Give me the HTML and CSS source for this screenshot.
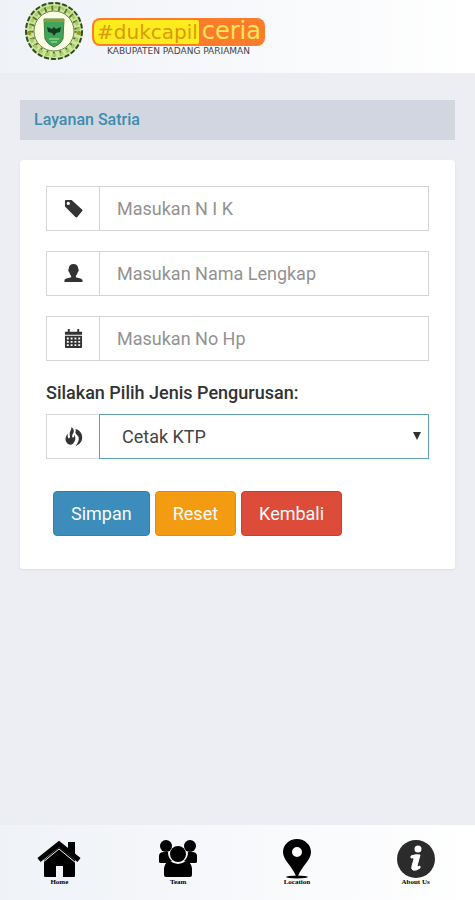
FILE: index.html
```html
<!DOCTYPE html>
<html lang="id">
<head>
<meta charset="utf-8">
<meta name="viewport" content="width=device-width, initial-scale=1">
<title>Layanan Satria</title>
<link rel="stylesheet" href="styles.css">
</head>
<body>
<header class="topbar">
  <svg class="seal" viewBox="0 0 60 60" aria-hidden="true">
    <circle cx="30" cy="30" r="29" fill="#cfe69a"/>
    <circle cx="30" cy="30" r="28" fill="none" stroke="#2f4a2c" stroke-width="2" stroke-dasharray="5 2"/>
    <circle cx="30" cy="30" r="23" fill="none" stroke="#557044" stroke-width="5" stroke-dasharray="2 5"/>
    <circle cx="30" cy="30" r="24" fill="none" stroke="#a9cc62" stroke-width="3" stroke-dasharray="4 3"/>
    <circle cx="30" cy="30" r="20" fill="#fbfde4" stroke="#6b8a45"/>
    <circle cx="5" cy="32" r="2" fill="#8c9620"/>
    <circle cx="55" cy="32" r="2" fill="#8c9620"/>
    <path d="M20 18H40L39 38Q37 43 30 46Q23 43 21 38Z" fill="#3fa55b" stroke="#487c3b"/>
    <path d="M20 18H40V21H20Z" fill="#8b9c3c"/>
    <path d="M23 26L28 28L30 26L32 28L37 26L36 31L32 32L30 35L28 32L24 31Z" fill="#173b22"/>
    <path d="M25 38H35M27 41H33" stroke="#80c477" stroke-width="2"/>
  </svg>
  <div class="brand">
    <div class="wordmark"><span class="word-main">#dukcapil</span><span class="word-end">ceria</span></div>
    <div class="region">KABUPATEN PADANG PARIAMAN</div>
  </div>
</header>

<main class="content">
  <h1 class="title">Layanan Satria</h1>
  <form class="card">
    <div class="group">
      <label class="addon" for="nik" aria-label="NIK">
        <svg class="glyph" viewBox="0 0 20 20"><path fill-rule="evenodd" d="M1 2Q1 1 2 1H8L19 11Q20 12 19 13L14 19Q13 20 12 19L1 8ZM4.500 3A1.700 1.700 0 1 0 4.500 6.400A1.700 1.700 0 1 0 4.500 3Z"/></svg>
      </label>
      <input class="field" id="nik" type="text" placeholder="Masukan N I K">
    </div>
    <div class="group">
      <label class="addon" for="nama" aria-label="Nama Lengkap">
        <svg class="glyph" viewBox="0 0 20 20"><path d="M10 0C13 0 15 2 15 5C16 6 15.500 8 14.500 8.500C14 11 13 11.500 12.500 12.500V14C14 15 19 15 19.500 17V19H.5V17C1 15 6 15 7.500 14V12.500C7 11.500 6 11 5.500 8.500C4.500 8 4 6 5 5C5 2 7 0 10 0Z"/></svg>
      </label>
      <input class="field" id="nama" type="text" placeholder="Masukan Nama Lengkap">
    </div>
    <div class="group">
      <label class="addon" for="hp" aria-label="No Hp">
        <svg class="glyph" viewBox="0 0 20 20"><path fill-rule="evenodd" d="M1 3H4V0H6V3H14V0H16V3H19V6H1ZM1 7H19V19Q19 20 18 20H2Q1 20 1 19ZM3 9V11H5V9ZM7 9V11H9V9ZM11 9V11H13V9ZM15 9V11H17V9ZM3 12.500V14.500H5V12.500ZM7 12.500V14.500H9V12.500ZM11 12.500V14.500H13V12.500ZM15 12.500V14.500H17V12.500ZM3 16V18H5V16ZM7 16V18H9V16ZM11 16V18H13V16ZM15 16V18H17V16Z"/></svg>
      </label>
      <input class="field" id="hp" type="tel" placeholder="Masukan No Hp">
    </div>
    <label class="caption" for="jenis">Silakan Pilih Jenis Pengurusan:</label>
    <div class="group">
      <span class="addon">
        <svg class="glyph" viewBox="0 0 20 20"><path d="M8 0C11 3 11 5 9 8C8 10 8.500 11.500 10 11C11 10.500 11 9 10.500 8C13 11 12 15 9.500 17.500C7 20 3 18 2 15C1 12 2 9 4 7C4 9 3.500 11 5 12C6.500 12 6.500 10 6 8C5.500 5 8 3 8 0ZM12 2C17 3 20 8 19 13C18.500 16 16 19 12 20C14.500 17 16 14 15.500 11C15 9 12.500 8 12 6C12 4.500 13 4 12 2Z"/></svg>
      </span>
      <div class="select-wrap">
        <select class="field select" id="jenis"><option>Cetak KTP</option></select>
        <svg class="caret" viewBox="0 0 8 8" aria-hidden="true"><path d="M0 0H8L4 8Z"/></svg>
      </div>
    </div>
    <div class="actions">
      <button class="btn save" type="submit">Simpan</button>
      <button class="btn reset" type="reset">Reset</button>
      <button class="btn back" type="button">Kembali</button>
    </div>
  </form>
</main>

<nav class="tabs">
  <a class="tab" href="#home">
    <svg class="tab-icon" viewBox="0 0 44 40"><path d="M22 8L38 21V37Q38 38 37 38H26V27H19V38H8Q7 38 7 37V21Z"/><path d="M2 21L22 5L42 21" fill="none" stroke="#000" stroke-width="5"/><path d="M31 3H38V17L31 11Z"/><path d="M5 24L22 10L39 24" fill="none" stroke="#f2f4f8" stroke-width="1"/></svg>
    <span>Home</span>
  </a>
  <a class="tab" href="#team">
    <svg class="tab-icon" viewBox="0 0 44 40"><circle cx="10" cy="7" r="6"/><circle cx="34" cy="7" r="6"/><path d="M3 23V17Q3 13 8 13H12Q12 19 16 22L11 24H5Q3 24 3 23ZM41 23V17Q41 13 36 13H32Q32 19 28 22L33 24H39Q41 24 41 23Z"/><circle cx="22" cy="15" r="8"/><path d="M14 22Q22 28 30 22Q35 23 36 29V36Q36 38 34 38H10Q8 38 8 36V29Q9 23 14 22Z"/></svg>
    <span>Team</span>
  </a>
  <a class="tab" href="#location">
    <svg class="tab-icon" viewBox="0 0 44 40"><path fill-rule="evenodd" d="M22 0C30 0 36 6 36 13C36 21 27 27 23 37H21C17 27 8 21 8 13C8 6 14 0 22 0ZM22 8A5 5 0 1 0 22 18A5 5 0 1 0 22 8Z"/><ellipse cx="22" cy="38" rx="11" ry="1.500"/></svg>
    <span>Location</span>
  </a>
  <a class="tab" href="#about">
    <svg class="tab-icon" viewBox="0 0 44 40"><circle cx="22" cy="20" r="19" fill="#2b2b2b"/><circle cx="24" cy="10" r="3.500" fill="#fff"/><path d="M17 17Q22 15 26 16L23 27Q23 29 26 27V29Q22 32 19 31Q17 30 18 27L20 20Q20 18 17 19Z" fill="#fff" stroke="#fff"/></svg>
    <span>About Us</span>
  </a>
</nav>
</body>
</html>
```
FILE: styles.css
```css
* {
  box-sizing: border-box;
}

body {
  margin: 0;
  min-height: 100vh;
  display: flex;
  flex-direction: column;
  background: #eceef3;
  color: #333;
  font-family: Roboto, sans-serif;
  font-size: 18px;
}

.topbar {
  display: flex;
  align-items: flex-start;
  gap: 8px;
  padding: 1px 24px 12px;
  background: linear-gradient(90deg, #eff2f7, #fff);
}

.seal {
  width: 60px;
  height: 60px;
}

.brand {
  padding-top: 17px;
  font-family: "DejaVu Sans", sans-serif;
}

.wordmark {
  display: flex;
  align-items: center;
  height: 28px;
  padding: 2px;
  border-radius: 8px;
  background: #fb7c2a;
  line-height: 24px;
}

.word-main {
  padding: 0 1px 0 3px;
  border-radius: 6px 2px 2px 6px;
  background: #ffec1c;
  color: #d99a10;
  font-size: 20px;
}

.word-end {
  padding: 0 2px 2px 3px;
  color: #ffe45c;
  font-size: 24px;
}

.region {
  color: #444;
  font-size: 9px;
  line-height: 11px;
  text-align: center;
}

.content {
  flex: 1;
  padding: 27px 20px;
}

.title {
  margin: 0 0 20px;
  padding: 0 14px;
  background: #d2d6e1;
  color: #3c8dae;
  font-size: 16px;
  font-weight: 500;
  line-height: 40px;
}

.card {
  padding: 26px 26px 33px;
  border-radius: 3px;
  background: #fff;
  box-shadow: 0 1px 2px #d8dbe1;
}

.group {
  display: flex;
  height: 45px;
  margin-bottom: 20px;
}

.addon {
  display: flex;
  align-items: center;
  justify-content: center;
  width: 53px;
  border: 1px solid #d5d7da;
  border-right: 0;
}

.glyph {
  width: 19px;
  height: 19px;
  fill: #333;
}

.field {
  flex: 1;
  min-width: 0;
  width: 100%;
  height: 100%;
  padding: 0 17px;
  border: 1px solid #d2d4d7;
  border-radius: 0;
  background: #fff;
  color: #444;
  font: inherit;
}

.field::placeholder {
  color: #929292;
  opacity: 1;
}

.select-wrap {
  flex: 1;
  position: relative;
}

.select {
  appearance: none;
  padding-left: 22px;
  border-color: #5f9cb5;
}

.caret {
  position: absolute;
  top: 18px;
  right: 8px;
  width: 8px;
  height: 8px;
  fill: #333;
  pointer-events: none;
}

.caption {
  display: block;
  margin-bottom: 9px;
  font-weight: 500;
  line-height: 24px;
}

.actions {
  display: flex;
  gap: 5px;
  padding: 12px 7px 0;
}

.btn {
  height: 45px;
  padding: 0 17px;
  border: 1px solid;
  border-radius: 4px;
  color: #f7fbfc;
  font: inherit;
}

.save {
  background: #3c8dbc;
  border-color: #367fa9;
}

.reset {
  background: #f39c12;
  border-color: #e08e0b;
}

.back {
  background: #dd4b39;
  border-color: #d73925;
}

.tabs {
  display: grid;
  grid-template-columns: repeat(4, 1fr);
  padding: 14px 0;
  background: linear-gradient(90deg, #eff2f7, #fff);
}

.tab {
  display: flex;
  flex-direction: column;
  align-items: center;
  color: #000;
  font-family: "Liberation Serif", serif;
  font-size: 7px;
  font-weight: bold;
  line-height: 7px;
  text-decoration: none;
}

.tab-icon {
  width: 44px;
  height: 40px;
}
```
